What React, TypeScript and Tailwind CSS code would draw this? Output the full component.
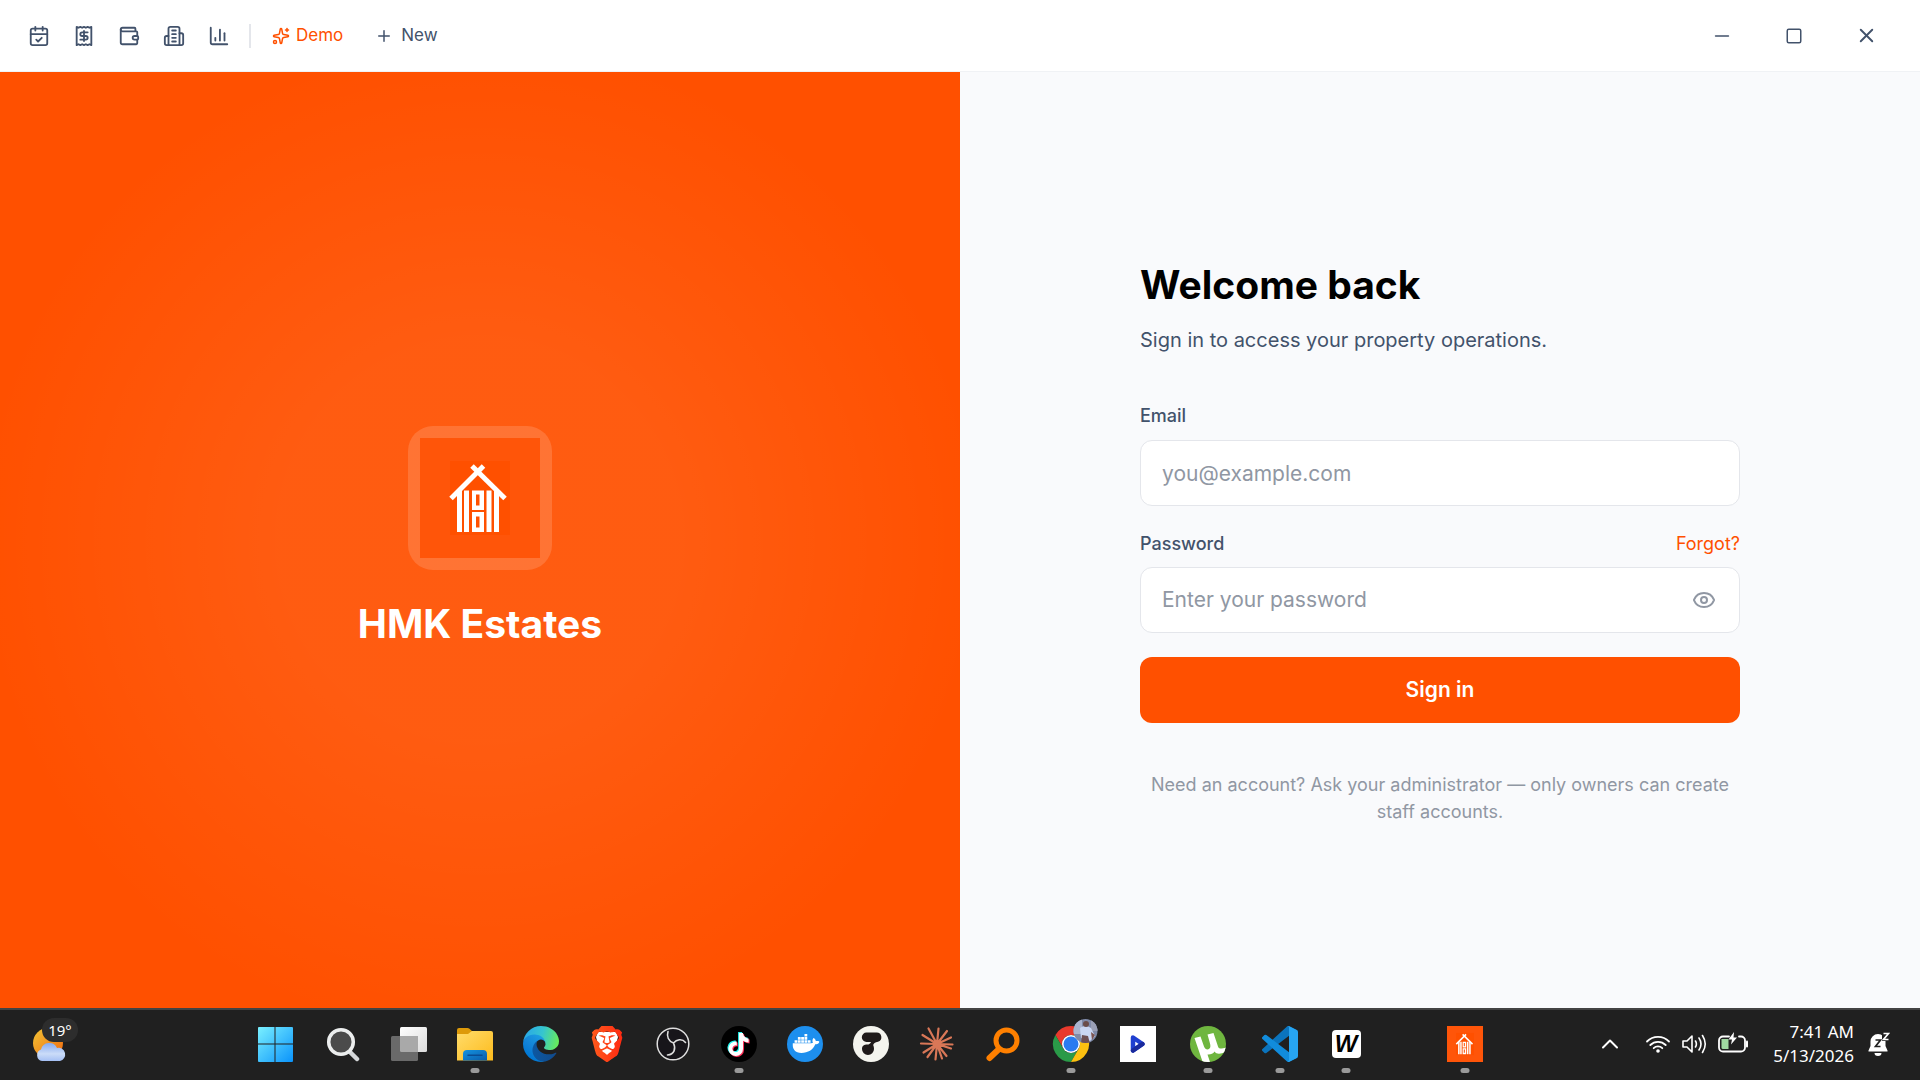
import { useState, type FormEvent, type ReactNode } from "react";
import {
  CalendarCheck,
  ChartColumn,
  Eye,
  EyeOff,
  Minus,
  Plus,
  Receipt,
  Sparkles,
  Square,
  Wallet,
  X,
} from "lucide-react";
import { FaDocker, FaTiktok } from "react-icons/fa";
import { SiBrave } from "react-icons/si";

function BuildingIcon() {
  return (
    <svg
      viewBox="0 0 24 24"
      className="size-[22px]"
      fill="none"
      stroke="currentColor"
      strokeWidth="2"
      strokeLinecap="round"
      strokeLinejoin="round"
    >
      <path d="M6 22V4a2 2 0 0 1 2-2h8a2 2 0 0 1 2 2v18Z" />
      <path d="M6 12H4a2 2 0 0 0-2 2v6a2 2 0 0 0 2 2h2" />
      <path d="M18 9h2a2 2 0 0 1 2 2v9a2 2 0 0 1-2 2h-2" />
      <path d="M10 6h4M10 10h4M10 14h4M10 18h4" />
    </svg>
  );
}

function HouseMark({ className }: { className: string }) {
  return (
    <svg viewBox="0 0 120 120" className={className}>
      <rect width="120" height="120" fill="#ff5509" />
      <rect x="30" y="23" width="60" height="74" fill="#ff5000" />
      <g stroke="#fff" strokeWidth="5">
        <path d="M31 60.5 63.5 28" />
        <path d="M52 28 85 60.5" />
      </g>
      <g fill="#fff">
        <path d="M37 54.5 42 50v44h-5Z" />
        <path d="M44 52.5h5V94h-5Z" />
        <path fillRule="evenodd" d="M52 52.5h12V72H52Zm4 4v11h3.500v-11Z" />
        <path fillRule="evenodd" d="M52 74h12v20H52Zm4 4.500v11h3.500v-11Z" />
        <path d="M66.500 52.500h5V94h-5Z" />
        <path d="M74 50l5 4.500V94h-5Z" />
      </g>
    </svg>
  );
}

const navItems = [
  { label: "Calendar", icon: <CalendarCheck className="size-[22px]" /> },
  { label: "Receipts", icon: <Receipt className="size-[22px]" /> },
  { label: "Wallet", icon: <Wallet className="size-[22px]" /> },
  { label: "Properties", icon: <BuildingIcon /> },
  { label: "Reports", icon: <ChartColumn className="size-[22px]" /> },
];

function TitleBar() {
  return (
    <header className="flex h-[72px] shrink-0 items-center justify-between border-b border-[#f0f2f5] bg-white pr-[18px] pl-4 text-[#42526b]">
      <nav className="flex items-center">
        {navItems.map((item) => (
          <button
            key={item.label}
            type="button"
            aria-label={item.label}
            className="flex size-[45px] items-center justify-center rounded-lg hover:bg-gray-100"
          >
            {item.icon}
          </button>
        ))}
        <span className="mx-2 h-6 w-0.5 bg-[#e4e6eb]" />
        <button type="button" className="ml-[13px] flex items-center gap-1.5 text-[17px] text-[#ff5000]">
          <Sparkles className="size-[18px]" strokeWidth={2} />
          Demo
        </button>
        <button type="button" className="ml-8 flex items-center gap-2 text-[17px]">
          <Plus className="size-[18px]" strokeWidth={2} />
          New
        </button>
      </nav>
      <div className="flex items-center">
        <button type="button" aria-label="Minimize" className="flex h-[45px] w-[72px] items-center justify-center">
          <Minus className="size-[22px]" strokeWidth={1.75} />
        </button>
        <button type="button" aria-label="Maximize" className="flex h-[45px] w-[72px] items-center justify-center">
          <Square className="size-[18px]" strokeWidth={2} />
        </button>
        <button type="button" aria-label="Close" className="flex h-[45px] w-[72px] items-center justify-center">
          <X className="size-[23px]" strokeWidth={2} />
        </button>
      </div>
    </header>
  );
}

function BrandPanel() {
  return (
    <section className="flex flex-1 flex-col items-center justify-center gap-6 bg-[#ff5000] bg-[radial-gradient(circle_at_center,rgba(255,255,255,0.065)_30%,transparent_75%)]">
      <div className="rounded-[25px] bg-white/15 p-3">
        <HouseMark className="size-[120px]" />
      </div>
      <h1 className="text-[39px] leading-[60px] font-bold text-white">HMK Estates</h1>
    </section>
  );
}

function SignInForm() {
  const [email, setEmail] = useState("");
  const [password, setPassword] = useState("");
  const [visible, setVisible] = useState(false);

  function handleSubmit(e: FormEvent) {
    e.preventDefault();
  }

  return (
    <section className="flex flex-1 items-center justify-center bg-[#f9fafc]">
      <form onSubmit={handleSubmit} className="flex w-full max-w-[600px] flex-col">
        <h2 className="text-[39px] leading-[60px] font-bold text-black">Welcome back</h2>
        <p className="mt-2.5 text-xl leading-[30px] text-[#42526b]">
          Sign in to access your property operations.
        </p>

        <label htmlFor="email" className="mt-12 text-[18px] leading-[26px] font-medium text-[#42526b]">
          Email
        </label>
        <input
          id="email"
          type="email"
          value={email}
          onChange={(e) => setEmail(e.target.value)}
          placeholder="you@example.com"
          className="mt-[11px] h-[66px] rounded-xl border border-[#e4e6eb] bg-white px-[21px] text-[21px] text-[#42526b] outline-none placeholder:text-[#9097a3] focus:border-[#ff5000]"
        />

        <div className="mt-[25px] flex justify-between text-[18px] leading-[26px]">
          <label htmlFor="password" className="font-medium text-[#42526b]">
            Password
          </label>
          <a href="#forgot" className="text-[#ff5000]">
            Forgot?
          </a>
        </div>
        <div className="mt-2.5 flex h-[66px] items-center rounded-xl border border-[#e4e6eb] bg-white pr-[23px] pl-[21px] focus-within:border-[#ff5000]">
          <input
            id="password"
            type={visible ? "text" : "password"}
            value={password}
            onChange={(e) => setPassword(e.target.value)}
            placeholder="Enter your password"
            className="min-w-0 flex-1 bg-transparent text-[21px] text-[#42526b] outline-none placeholder:text-[#9097a3]"
          />
          <button
            type="button"
            aria-label={visible ? "Hide password" : "Show password"}
            onClick={() => setVisible(!visible)}
            className="text-[#9097a3]"
          >
            {visible ? <EyeOff className="size-6" /> : <Eye className="size-6" />}
          </button>
        </div>

        <button type="submit" className="mt-6 h-[66px] rounded-xl bg-[#ff5000] text-[21px] font-semibold text-white">
          Sign in
        </button>

        <p className="mt-12 text-center text-[18px] leading-[27px] text-[#9097a3]">
          Need an account? Ask your administrator — only owners can create staff accounts.
        </p>
      </form>
    </section>
  );
}

function WeatherIcon() {
  return (
    <svg viewBox="0 0 36 36" className="size-9">
      <defs>
        <linearGradient id="sun" x1="0" y1="0" x2="1" y2="1">
          <stop offset="0" stopColor="#f2c535" />
          <stop offset="1" stopColor="#f0660e" />
        </linearGradient>
        <linearGradient id="cloud" x1="0" y1="0" x2="0" y2="1">
          <stop offset="0" stopColor="#85aaf0" />
          <stop offset="0.6" stopColor="#cbdcf8" />
          <stop offset="1" stopColor="#a5c0f4" />
        </linearGradient>
      </defs>
      <circle cx="17" cy="17" r="15" fill="url(#sun)" />
      <path
        d="M11 35a6 6 0 0 1-1-11.500 8.500 8.500 0 0 1 16-1.500 6.500 6.500 0 0 1 3 13Z"
        fill="url(#cloud)"
      />
    </svg>
  );
}

function StartIcon() {
  return (
    <svg viewBox="0 0 36 36" className="size-9">
      <defs>
        <linearGradient id="win" x1="0" y1="0" x2="36" y2="36" gradientUnits="userSpaceOnUse">
          <stop offset="0" stopColor="#7df3ff" />
          <stop offset="1" stopColor="#0a93fb" />
        </linearGradient>
      </defs>
      <path
        fill="url(#win)"
        d="M1 2a1 1 0 0 1 1-1h15.500v16.500H1ZM18.500 1H35a1 1 0 0 1 1 1v15.500H18.500ZM1 18.500h16.500V36H2a1 1 0 0 1-1-1ZM18.500 18.500H36V35a1 1 0 0 1-1 1H18.500Z"
      />
    </svg>
  );
}

function SearchIcon() {
  return (
    <svg viewBox="0 0 36 36" className="size-9">
      <path d="m25 26 7 7" stroke="#d5d8da" strokeWidth="4.500" strokeLinecap="round" />
      <circle cx="16" cy="16" r="12.300" fill="#4b4b4b" stroke="#eceeee" strokeWidth="3.500" />
    </svg>
  );
}

function TaskViewIcon() {
  return (
    <svg viewBox="0 0 36 36" className="size-9">
      <defs>
        <linearGradient id="tvFront" x1="0" y1="0" x2="1" y2="1">
          <stop offset="0" stopColor="#fff" />
          <stop offset="1" stopColor="#dcdcdc" />
        </linearGradient>
      </defs>
      <rect x="9" y="1" width="27" height="25" rx="1.500" fill="url(#tvFront)" />
      <rect x="0" y="10" width="27" height="25" rx="1.500" fill="#6a6a6a" />
      <path d="M9 10h18v16H10.500A1.500 1.500 0 0 1 9 24.500Z" fill="#a9a9a9" />
    </svg>
  );
}

function ExplorerIcon() {
  return (
    <svg viewBox="0 0 36 36" className="size-9">
      <defs>
        <linearGradient id="folder" x1="0" y1="0" x2="1" y2="1">
          <stop offset="0" stopColor="#ffdc6b" />
          <stop offset="1" stopColor="#fdbb1c" />
        </linearGradient>
        <linearGradient id="tray" x1="0" y1="0" x2="1" y2="1">
          <stop offset="0" stopColor="#1493e0" />
          <stop offset="1" stopColor="#0a5cab" />
        </linearGradient>
      </defs>
      <path d="M0 4a2 2 0 0 1 2-2h8.500a3 3 0 0 1 2 .8L16 6v3H0Z" fill="#dd9a0a" />
      <path d="M0 8h11l4-3h19a2 2 0 0 1 2 2v27.500H0Z" fill="url(#folder)" />
      <path d="M6 34.500V28a4 4 0 0 1 4-4h16a4 4 0 0 1 4 4v6.500Z" fill="url(#tray)" />
      <path d="M11 29.300h14" stroke="#0a4c93" strokeWidth="1.500" strokeLinecap="round" />
    </svg>
  );
}

function EdgeIcon() {
  return (
    <svg viewBox="0 0 256 256" className="size-9">
      <defs>
        <linearGradient id="edgeA" x1="60" y1="180" x2="240" y2="180" gradientUnits="userSpaceOnUse">
          <stop offset="0" stopColor="#0c59a4" />
          <stop offset="1" stopColor="#114a8b" />
        </linearGradient>
        <linearGradient id="edgeB" x1="150" y1="90" x2="45" y2="220" gradientUnits="userSpaceOnUse">
          <stop offset="0" stopColor="#1b9de2" />
          <stop offset="0.6" stopColor="#1383d8" />
          <stop offset="1" stopColor="#0078d4" />
        </linearGradient>
        <linearGradient id="edgeC" x1="20" y1="60" x2="250" y2="120" gradientUnits="userSpaceOnUse">
          <stop offset="0" stopColor="#29a9e6" />
          <stop offset="0.5" stopColor="#36c5cf" />
          <stop offset="1" stopColor="#66eb5e" />
        </linearGradient>
      </defs>
      <g transform="translate(-4.63 -4.92)">
        <path
          fill="url(#edgeA)"
          d="M235.680 195.210a93.730 93.730 0 0 1-10.540 4.710 101.870 101.870 0 0 1-35.900 6.460c-47.320 0-88.540-32.550-88.540-74.320A31.480 31.480 0 0 1 117.130 104.600c-42.800 1.800-53.800 46.400-53.800 72.530 0 73.880 68.090 81.370 82.760 81.370 7.910 0 19.840-2.300 27-4.560l1.310-.44A128.340 128.340 0 0 0 241 201.090a4 4 0 0 0-5.320-5.880z"
        />
        <path
          fill="url(#edgeB)"
          d="M110.340 246.340A79.200 79.200 0 0 1 87.600 225 80.720 80.720 0 0 1 117.130 104.600c3.120-1.470 8.450-4.130 15.540-4a32.350 32.350 0 0 1 25.690 13 31.880 31.880 0 0 1 6.360 18.660c0-.21 24.460-79.600-80-79.600-43.900 0-80 41.660-80 78.210a130.150 130.150 0 0 0 12.110 56 128 128 0 0 0 156.380 67.110 75.550 75.550 0 0 1-62.780-8z"
        />
        <path
          fill="url(#edgeC)"
          d="M156.940 153.780c-.81 1.050-3.300 2.500-3.300 5.660 0 2.610 1.700 5.120 4.720 7.230 14.380 10 41.490 8.680 41.560 8.680A59.560 59.560 0 0 0 230.190 167a61.380 61.380 0 0 0 30.430-52.880c.26-22.410-8-37.310-11.340-43.910-21.190-41.450-66.930-65.290-116.670-65.290a128 128 0 0 0-128 126.200c.48-36.540 36.800-66.050 80-66.050 3.500 0 23.460.34 42 10.070 16.340 8.580 24.900 18.940 30.850 29.210 6.180 10.670 7.280 24.150 7.280 29.520s-2.740 13.330-7.800 19.910z"
        />
      </g>
    </svg>
  );
}

function BraveIcon() {
  return (
    <svg viewBox="0 0 36 36" className="size-9">
      <defs>
        <linearGradient id="brave" x1="0" y1="0" x2="1" y2="0">
          <stop offset="0" stopColor="#ff5a1c" />
          <stop offset="1" stopColor="#ff2a12" />
        </linearGradient>
      </defs>
      <path d="M9 6h18l2 5-4 15-7 5-7-5-4-15Z" fill="#fff" />
      <SiBrave size={36} fill="url(#brave)" />
    </svg>
  );
}

function ObsIcon() {
  return (
    <svg viewBox="0 0 36 36" className="size-9" fill="none" stroke="#dedede" strokeLinecap="round">
      <circle cx="18" cy="18" r="15.800" fill="#17151a" strokeWidth="1.500" />
      <path
        d="M18.500 17C13.500 15 11.500 10.500 13 5.500M18.500 17C21.500 13.500 27 12 30.500 16.500M18.500 17C21 22.500 19.500 28.500 12.500 29"
        strokeWidth="1.600"
      />
    </svg>
  );
}

function TiktokIcon() {
  return (
    <svg viewBox="0 0 36 36" className="size-9">
      <circle cx="18" cy="18" r="18" fill="#000" />
      <FaTiktok x="5" y="6" size={23} fill="#25f4ee" />
      <FaTiktok x="7" y="8" size={23} fill="#fe2c55" />
      <FaTiktok x="6" y="7" size={23} fill="#fff" />
    </svg>
  );
}

function DockerIcon() {
  return (
    <svg viewBox="0 0 36 36" className="size-9">
      <circle cx="18" cy="18" r="18" fill="#1d8fee" />
      <FaDocker x="5.500" y="4" size={27} fill="#fff" />
    </svg>
  );
}

function BlobIcon() {
  return (
    <svg viewBox="0 0 36 36" className="size-9">
      <circle cx="18" cy="18" r="18" fill="#f4f4ee" />
      <path
        d="M13.500 6.500h10a4.700 4.700 0 0 1 1.500 9.200c-3 .8-4.500 1.500-4.800 3.300.6 1.200.8 2.500.8 4a6 6 0 1 1-12 0c0-3.500 2.500-4.500 5-4.500 2.300 0 3.500-1.200 4-2.600h-4.500a4.700 4.700 0 0 1 0-9.400Z"
        fill="#1f1a1a"
      />
    </svg>
  );
}

function BurstIcon() {
  return (
    <svg viewBox="0 0 36 36" className="size-9">
      <g stroke="#d97757" strokeWidth="2.200" strokeLinecap="round">
        <path d="M18 18 9.500 2.500M18 18 19.500 2.500M18 18 28 5M18 18 32 11.500M18 18 33.500 18.500M18 18 32 22.500M18 18 27.500 30M18 18 23 32.500M18 18 16.500 33.500M18 18 8.500 31M18 18 4.500 26.500M18 18 2 17.500M18 18 3.500 9" />
      </g>
      <circle cx="18" cy="18" r="4" fill="#d97757" />
    </svg>
  );
}

function OrangeSearchIcon() {
  return (
    <svg viewBox="0 0 36 36" className="size-9" fill="none" stroke="#ff8000">
      <path d="M13 24 4.500 32" strokeWidth="6" strokeLinecap="round" />
      <circle cx="21.500" cy="14.500" r="10.500" strokeWidth="5" />
    </svg>
  );
}

function ChromeIcon() {
  return (
    <svg viewBox="0 0 36 36" className="size-9 overflow-visible">
      <path d="M2.400 9A18 18 0 0 1 33.600 9H18a9 9 0 0 0-7.800 13.500Z" fill="#e8392c" />
      <path d="M2.400 9l7.800 13.500a9 9 0 0 0 15.600 0L18 36A18 18 0 0 1 2.400 9Z" fill="#2a9a48" />
      <path d="M33.600 9H18a9 9 0 0 1 7.800 13.500L18 36A18 18 0 0 0 33.600 9Z" fill="#fcc010" />
      <circle cx="18" cy="18" r="9" fill="#fff" />
      <circle cx="18" cy="18" r="7.500" fill="#2a7bf0" />
      <clipPath id="avatar">
        <circle cx="32.500" cy="5" r="12" />
      </clipPath>
      <g clipPath="url(#avatar)">
        <path d="M20-8h26v26H20Z" fill="#7f8aa8" />
        <path d="M20-8h9v16h-9Z" fill="#aab4cf" />
        <path d="M38-8h8v13h-8Z" fill="#9a9fb5" />
        <path d="M27 2q5-4 11 0l4 8-5 5-9-3Z" fill="#c9d6f2" />
        <circle cx="33" cy="-2" r="3" fill="#6b4d4a" />
        <path d="M29 9l6 1 2 8h-9Z" fill="#6d4f52" />
        <path d="M38 6l4 3-3 5Z" fill="#7c5450" />
      </g>
    </svg>
  );
}

function PlayIcon() {
  return (
    <svg viewBox="0 0 36 36" className="size-9">
      <path d="M0 0h36v36H0Z" fill="#fff" />
      <path d="M13 11.500 22.500 18 13 24.500Z" fill="#fff" stroke="#1f3fd0" strokeWidth="4.500" strokeLinejoin="round" />
      <path d="M13 24.500 22.500 18" stroke="#1a2a9c" strokeWidth="4.500" strokeLinecap="round" />
    </svg>
  );
}

function TorrentIcon() {
  return (
    <svg viewBox="0 0 36 36" className="size-9">
      <defs>
        <clipPath id="torrentClip">
          <circle cx="18" cy="18" r="18" />
        </clipPath>
      </defs>
      <circle cx="18" cy="18" r="18" fill="#6fb63f" />
      <g clipPath="url(#torrentClip)">
        <path
          d="M4.500 12 10.500 10.500l3.500 10c1 3 3.500 3.500 5 2.500 1.800-1.200 1.500-3.500 1-5.500L17.500 8.500l6-1.500 4.500 13.500c.8 2.300 2.500 2.800 8 1l-1 4.500c-4 2-8.500 2.500-10.500-.5-1.500 2.500-4 3.200-7 3L20 36l-7 1Z"
          fill="#fff"
        />
      </g>
    </svg>
  );
}

function CodeIcon() {
  return (
    <svg viewBox="0 0 100 100" className="size-9">
      <path
        d="M96.460 10.800 75.860.88a6.250 6.250 0 0 0-7.110 1.200L1.300 63.580a4.170 4.170 0 0 0 0 6.170l5.510 5a4.170 4.170 0 0 0 5.320.24L93.360 13.370c2.730-2.070 6.640-.12 6.640 3.300v-.24a6.250 6.250 0 0 0-3.540-5.630Z"
        fill="#0b74bd"
      />
      <path
        d="M96.460 89.200 75.860 99.120a6.250 6.250 0 0 1-7.110-1.200L1.300 36.420a4.170 4.170 0 0 1 0-6.170l5.510-5a4.170 4.170 0 0 1 5.320-.24L93.360 86.630c2.730 2.070 6.640.12 6.640-3.300v.24a6.250 6.250 0 0 1-3.540 5.630Z"
        fill="#118cdc"
      />
      <path
        d="M75.860 99.130a6.250 6.250 0 0 1-7.110-1.210c2.310 2.300 6.250.67 6.250-2.590V4.670c0-3.260-3.940-4.890-6.250-2.590A6.250 6.250 0 0 1 75.860.87l20.600 9.910A6.250 6.250 0 0 1 100 16.410v67.180a6.250 6.250 0 0 1-3.540 5.630Z"
        fill="#27a5f2"
      />
    </svg>
  );
}

function WordIcon() {
  return (
    <span className="flex h-7 w-[29px] items-center justify-center rounded bg-white font-['Liberation_Sans',Arial,sans-serif] text-[24px] leading-none font-bold text-black italic">
      W
    </span>
  );
}

type TaskItem = { name: string; icon: ReactNode; open?: boolean; gap?: string };

const taskItems: TaskItem[] = [
  { name: "Start", icon: <StartIcon /> },
  { name: "Search", icon: <SearchIcon />, gap: "ml-0.5" },
  { name: "Task View", icon: <TaskViewIcon /> },
  { name: "File Explorer", icon: <ExplorerIcon />, open: true },
  { name: "Edge", icon: <EdgeIcon /> },
  { name: "Brave", icon: <BraveIcon /> },
  { name: "OBS Studio", icon: <ObsIcon /> },
  { name: "TikTok", icon: <TiktokIcon />, open: true },
  { name: "Docker", icon: <DockerIcon /> },
  { name: "Notes", icon: <BlobIcon /> },
  { name: "Claude", icon: <BurstIcon /> },
  { name: "Finder", icon: <OrangeSearchIcon /> },
  { name: "Chrome", icon: <ChromeIcon />, open: true, gap: "ml-0.5" },
  { name: "Player", icon: <PlayIcon />, gap: "ml-px" },
  { name: "uTorrent", icon: <TorrentIcon />, open: true, gap: "ml-1" },
  { name: "VS Code", icon: <CodeIcon />, open: true, gap: "ml-1.5" },
  { name: "Writer", icon: <WordIcon />, open: true },
  { name: "HMK Estates", icon: <HouseMark className="size-9" />, open: true, gap: "ml-[53px]" },
];

function BatteryIcon() {
  return (
    <svg viewBox="0 0 32 24" className="h-6 w-8" fill="none">
      <path
        d="M12 4.500H6a4 4 0 0 0-4 4v7a4 4 0 0 0 4 4h18a4 4 0 0 0 4-4v-7a4 4 0 0 0-4-4h-2"
        stroke="#fff"
        strokeWidth="1.800"
        strokeLinecap="round"
      />
      <path d="M30 9.500v5" stroke="#fff" strokeWidth="2" strokeLinecap="round" />
      <path d="M4.500 7h7V17H6a1.500 1.500 0 0 1-1.500-1.500Z" fill="#9fd8a0" />
      <path d="M17 0 11.500 7.500h3.500l-1 5 6-7h-3.500Z" fill="#fff" />
    </svg>
  );
}

function TrayIcons() {
  return (
    <>
      <button type="button" aria-label="Show hidden icons" className="text-white">
        <svg viewBox="0 0 18 12" className="h-3 w-[18px]" fill="none" stroke="currentColor" strokeWidth="2">
          <path d="m2 9.500 7-7 7 7" strokeLinecap="round" strokeLinejoin="round" />
        </svg>
      </button>
      <button type="button" aria-label="Network, sound and battery" className="ml-[26px] flex items-center gap-2.5 text-white">
        <svg viewBox="0 0 26 20" className="h-5 w-[26px]" fill="none" stroke="currentColor" strokeWidth="1.800" strokeLinecap="round">
          <path d="M2 7.500a15.500 15.500 0 0 1 22 0M5.300 11a11 11 0 0 1 15.400 0M8.700 14.200a6.200 6.200 0 0 1 8.600 0" />
          <circle cx="13" cy="17" r="1.800" fill="currentColor" stroke="none" />
        </svg>
        <svg viewBox="0 0 26 22" className="h-[22px] w-[26px]" fill="none" stroke="currentColor" strokeWidth="1.600" strokeLinecap="round" strokeLinejoin="round">
          <path d="M2 8v6h4l5 5V3L6 8Z" />
          <path d="M14.500 8q1.800 3 0 6M18 5q4 6 0 12M21.500 2.500q5.500 8.500 0 17" />
        </svg>
        <BatteryIcon />
      </button>
    </>
  );
}

function SnoozeBell() {
  return (
    <svg viewBox="0 0 22 24" className="h-6 w-[22px]">
      <path d="M10 2a7.500 7.500 0 0 0-7.500 7.500V14L.5 18.500V19.500h19V18.500L17.500 14V9.500A7.500 7.500 0 0 0 10 2Z" fill="#fff" />
      <path d="M6.500 21h7a3.500 3 0 0 1-7 0Z" fill="#fff" />
      <path d="M14-1h8v10h-8Z" fill="#202020" />
      <path d="M15.500 1.500h5L15.500 7.500h5" fill="none" stroke="#fff" strokeWidth="1.700" />
      <path d="M7.500 8h5L7.500 14.500h5" fill="none" stroke="#202020" strokeWidth="1.700" />
    </svg>
  );
}

function Taskbar() {
  return (
    <footer className="flex h-[72px] shrink-0 items-center border-t-2 border-[#434343] bg-[#202020] pb-0.5">
      <div className="w-[242px] shrink-0 pl-[31px]">
        <button type="button" aria-label="Weather, 19 degrees" className="relative block">
          <WeatherIcon />
          <span className="absolute -top-2 left-[11px] flex h-6 w-9 items-center justify-center rounded-full bg-[#2d2d2d] font-['Noto_Sans',sans-serif] text-[15px] text-white">
            19°
          </span>
        </button>
      </div>
      <div className="flex h-full shrink-0">
        {taskItems.map((item) => (
          <button
            key={item.name}
            type="button"
            aria-label={item.name}
            className={`relative flex w-[66px] items-center justify-center ${item.gap ?? ""}`}
          >
            {item.icon}
            {item.open && (
              <span className="absolute bottom-[5px] left-1/2 h-[5px] w-[9px] -translate-x-1/2 rounded-full bg-[#9a9a9a]" />
            )}
          </button>
        ))}
      </div>
      <div className="ml-auto flex shrink-0 items-center pr-[30px] text-white">
        <TrayIcons />
        <time className="ml-6 text-right font-['Noto_Sans',sans-serif] text-[17px] leading-6">
          7:41 AM
          <br />
          5/13/2026
        </time>
        <button type="button" aria-label="Notifications" className="ml-3.5">
          <SnoozeBell />
        </button>
      </div>
    </footer>
  );
}

export default function App() {
  return (
    <div className="flex min-h-screen flex-col font-['Inter','Liberation_Sans',sans-serif]">
      <TitleBar />
      <main className="flex flex-1">
        <BrandPanel />
        <SignInForm />
      </main>
      <Taskbar />
    </div>
  );
}
